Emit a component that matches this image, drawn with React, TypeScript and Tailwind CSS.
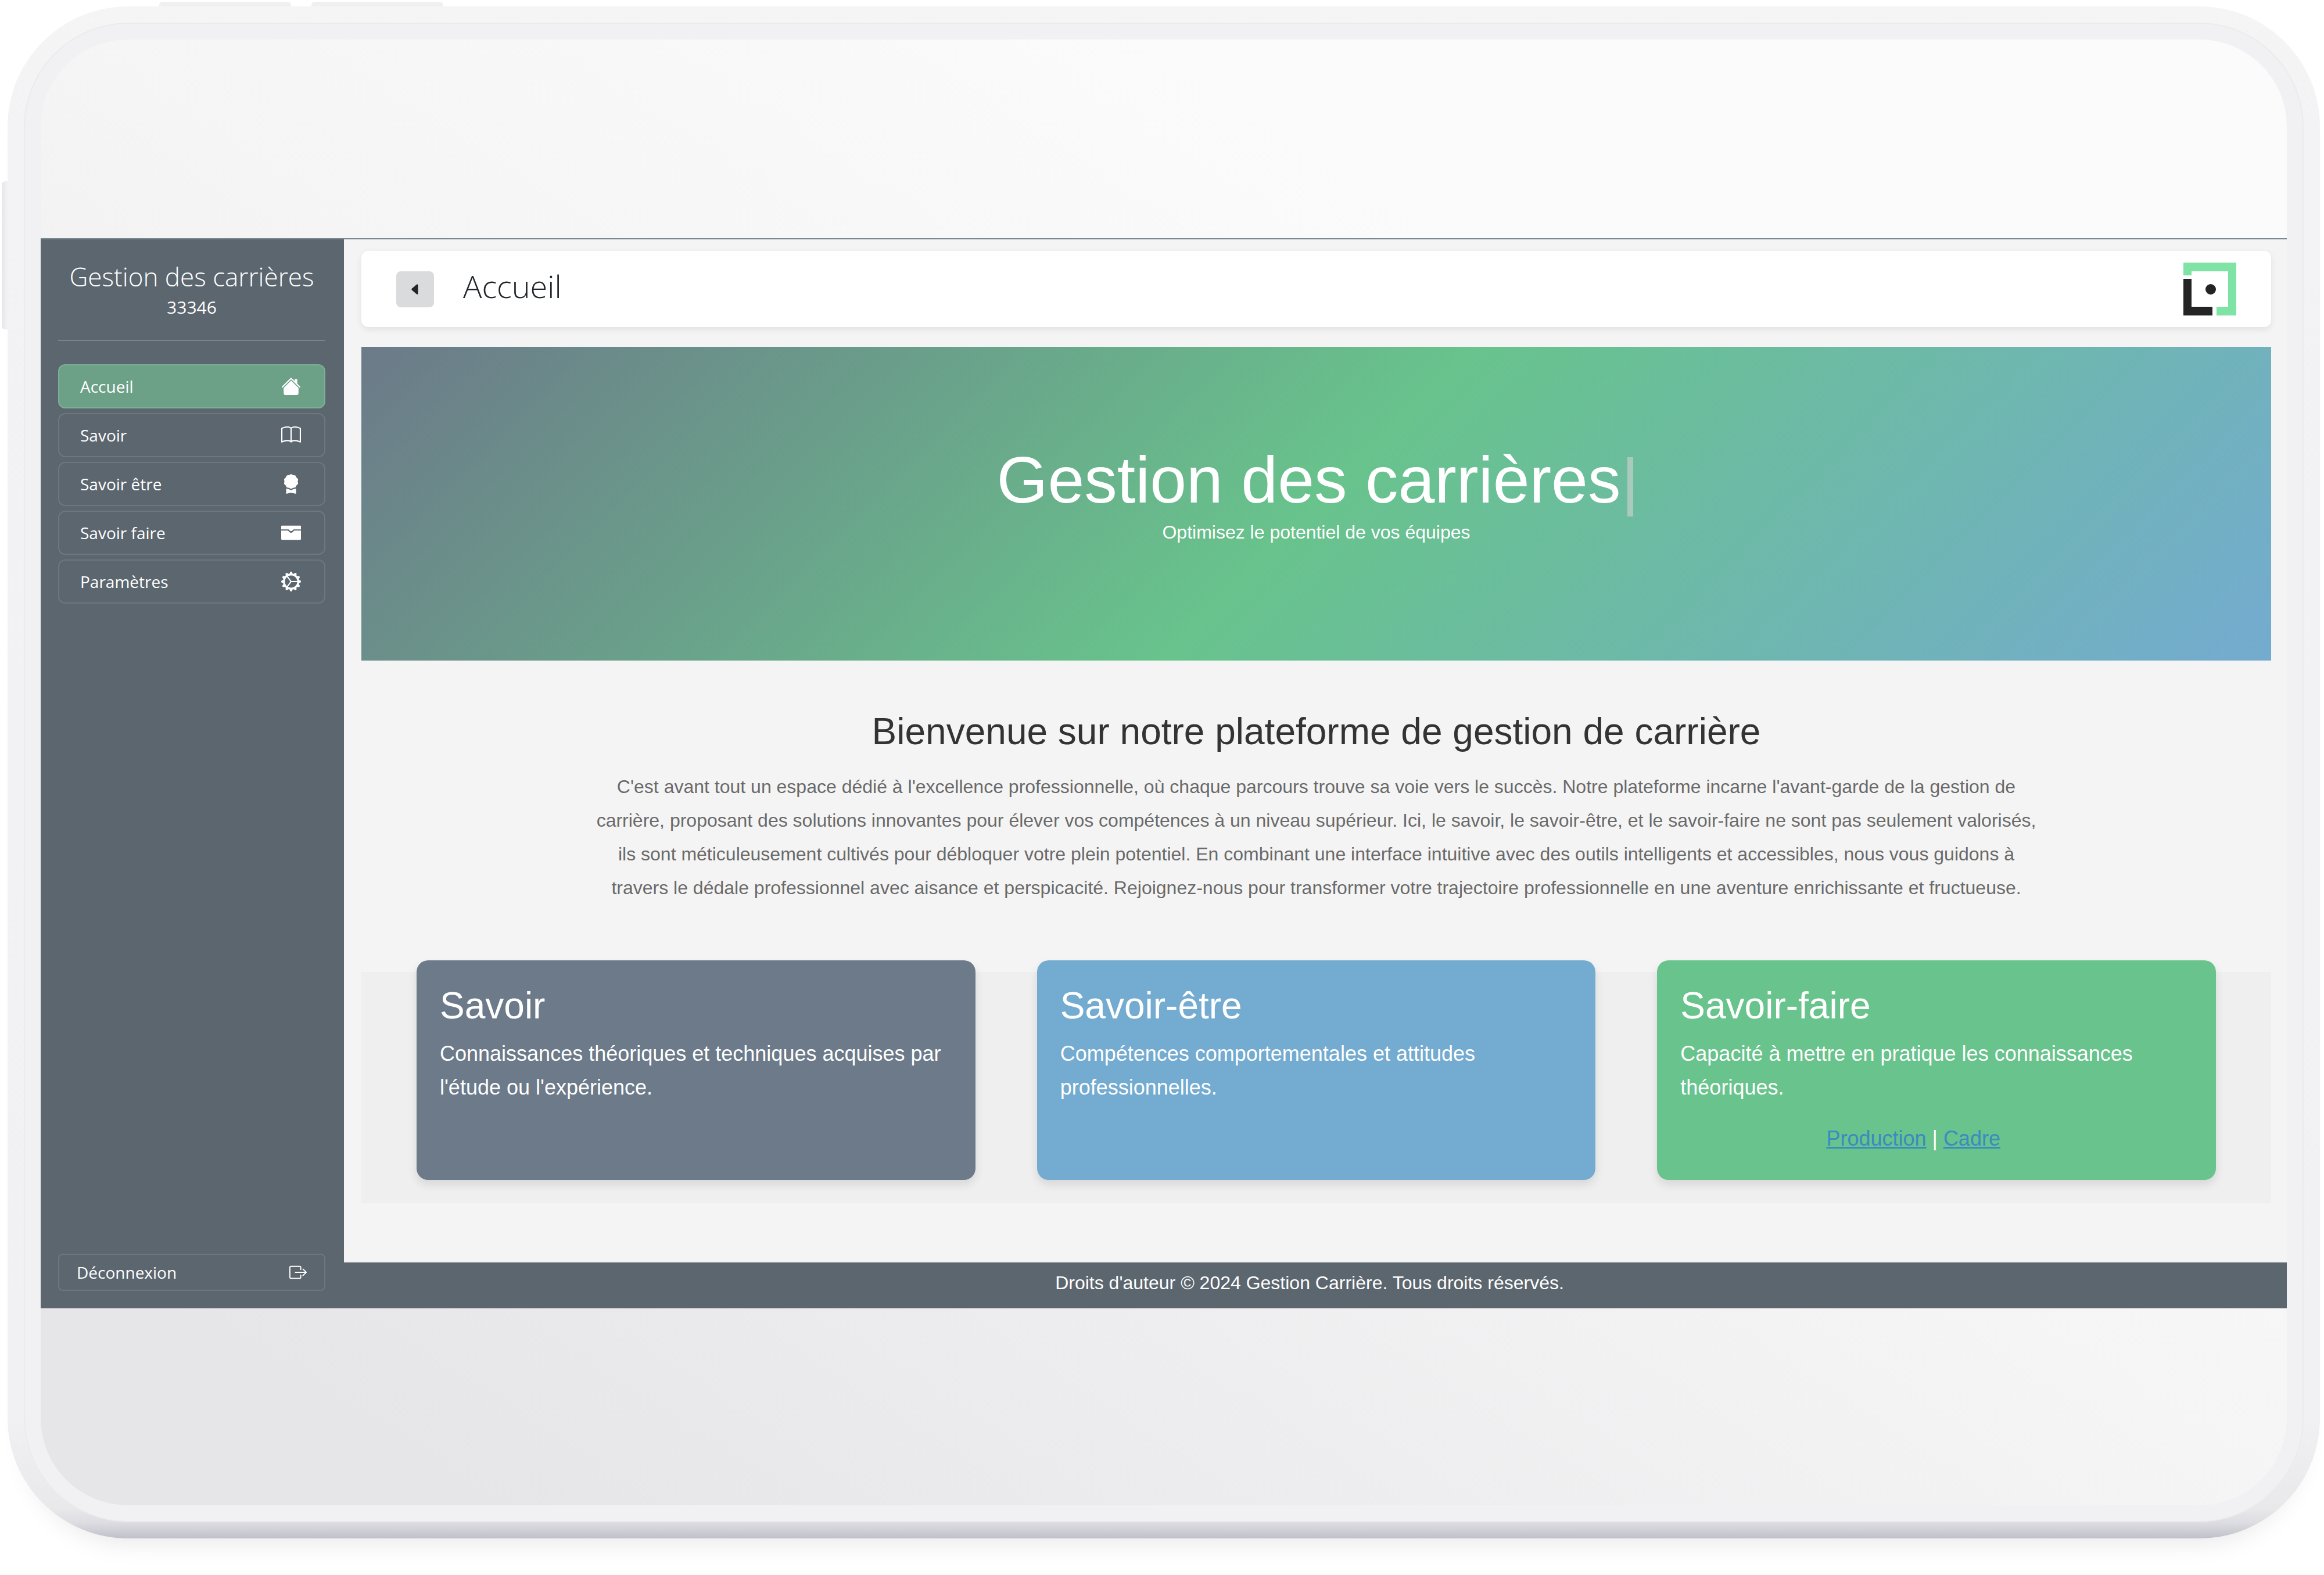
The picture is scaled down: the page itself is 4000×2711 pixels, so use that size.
import type { ReactNode } from "react";
import { BsAwardFill, BsBook, BsBoxArrowRight, BsGearWideConnected, BsHouseFill, BsCaretLeftFill } from "react-icons/bs";

function BriefcaseIcon() {
  return (
    <svg viewBox="0 0 36 36" className="size-[34px]" fill="currentColor" aria-hidden="true">
      <path d="M1 5h34a1 1 0 0 1 1 1v6H23c-1.500 0-2 3-5 3s-3.500-3-5-3H0V6a1 1 0 0 1 1-1z" />
      <path d="M0 14h12c1.500 0 2.500 4 6 4s4.500-4 6-4h12v15a2 2 0 0 1-2 2H2a2 2 0 0 1-2-2z" />
    </svg>
  );
}

const navItems: { label: string; icon: ReactNode; active?: boolean }[] = [
  { label: "Accueil", icon: <BsHouseFill className="size-[34px]" />, active: true },
  { label: "Savoir", icon: <BsBook className="size-[34px]" /> },
  { label: "Savoir être", icon: <BsAwardFill className="size-[34px]" /> },
  { label: "Savoir faire", icon: <BriefcaseIcon /> },
  { label: "Paramètres", icon: <BsGearWideConnected className="size-[34px]" /> },
];

function Sidebar() {
  return (
    <aside className="flex w-[522px] shrink-0 flex-col bg-[#5c666f] pr-8 pb-[30px] pl-[30px] font-['Open_Sans',sans-serif] text-white">
      <div className="border-b-2 border-[#7b848d] pt-8 pb-[35px] text-center">
        <h2 className="text-[44px] leading-[64px] font-light whitespace-nowrap">Gestion des carrières</h2>
        <p className="text-[30px] leading-[42px]">33346</p>
      </div>
      <nav className="mt-10 flex flex-col gap-2">
        {navItems.map((item) => (
          <a
            key={item.label}
            href="#"
            className={
              item.active
                ? "flex h-[76px] items-center justify-between rounded-xl border-2 border-[#7cb096] bg-[#6ca188] pr-10 pl-9 text-[28px]"
                : "flex h-[76px] items-center justify-between rounded-xl border-2 border-[#6d7780] pr-10 pl-9 text-[28px]"
            }
          >
            {item.label}
            {item.icon}
          </a>
        ))}
      </nav>
      <button className="mt-auto flex h-16 items-center justify-between rounded-lg border-2 border-[#6d7780] px-[30px] text-[28px]">
        Déconnexion
        <BsBoxArrowRight className="size-[30px]" />
      </button>
    </aside>
  );
}

function Logo() {
  return (
    <svg viewBox="0 0 91 91" className="size-[91px]" role="img" aria-label="Logo">
      <path d="M0 0H91V91H57V76H77V15H14V22H0z" fill="#7fe3a6" />
      <path d="M0 28H14V76H50V91H0z" fill="#242424" />
      <circle cx="47" cy="46" r="9" fill="#242424" />
    </svg>
  );
}

function Card({ title, text, color, children }: { title: string; text: string; color: string; children?: ReactNode }) {
  return (
    <article className={`flex min-h-[378px] flex-col rounded-[20px] px-10 pt-10 shadow-[0_8px_16px_rgba(0,0,0,0.1)] ${color}`}>
      <h3 className="text-[64px] leading-[76px]">{title}</h3>
      <p className="mt-4 text-[36px] leading-[58px]">{text}</p>
      {children}
    </article>
  );
}

function AppScreen() {
  return (
    <div className="flex min-h-[1842px] border-t-2 border-[#7b8890] font-['Liberation_Sans',Arial,sans-serif]">
      <Sidebar />
      <div className="flex min-w-0 grow flex-col bg-[#f4f4f4]">
        <div className="grow pt-5 pr-[27px] pl-[30px]">
          <header className="flex h-[131px] items-center rounded-xl bg-white px-[60px] shadow-[0_4px_12px_rgba(0,0,0,0.08)]">
            <button aria-label="Réduire le menu" className="flex h-[62px] w-[65px] items-center justify-center rounded-lg bg-[#dadbdd] text-[#212529]">
              <BsCaretLeftFill className="size-6" />
            </button>
            <h1 className="ml-[50px] grow pb-3 font-['Open_Sans',sans-serif] text-[54px] leading-[64px] font-light text-[#212529]">Accueil</h1>
            <Logo />
          </header>

          <section className="mt-[34px] flex h-[540px] flex-col items-center bg-[linear-gradient(135deg,#6c7a89,#68c38c_50%,#74abd0)] pt-[162px] text-white">
            <h2 className="flex items-end pr-1 text-[113px] leading-[134px]">
              Gestion des carrières
              <span className="mb-1 ml-3 h-[102px] w-[10px] bg-[#a8cbbd]" />
            </h2>
            <p className="text-[32px] leading-[46px]">Optimisez le potentiel de vos équipes</p>
          </section>

          <section className="mx-auto flex max-w-[2500px] flex-col items-center pt-[82px] text-center">
            <h2 className="text-[64px] leading-[80px] text-[#333]">Bienvenue sur notre plateforme de gestion de carrière</h2>
            <p className="mt-[26px] text-[32px] leading-[58px] text-[#6a6a6a]">
              C'est avant tout un espace dédié à l'excellence professionnelle, où chaque parcours trouve sa voie vers le
              succès. Notre plateforme incarne l'avant-garde de la gestion de carrière, proposant des solutions innovantes
              pour élever vos compétences à un niveau supérieur. Ici, le savoir, le savoir-être, et le savoir-faire ne sont
              pas seulement valorisés, ils sont méticuleusement cultivés pour débloquer votre plein potentiel. En combinant
              une interface intuitive avec des outils intelligents et accessibles, nous vous guidons à travers le dédale
              professionnel avec aisance et perspicacité. Rejoignez-nous pour transformer votre trajectoire professionnelle
              en une aventure enrichissante et fructueuse.
            </p>
          </section>

          <section className="mt-[116px] flex flex-col bg-[#efefef] px-[95px] pb-10">
            <div className="-mt-5 grid grid-cols-3 gap-[106px] text-white">
              <Card title="Savoir" text="Connaissances théoriques et techniques acquises par l'étude ou l'expérience." color="bg-[#6c7a89]" />
              <Card title="Savoir-être" text="Compétences comportementales et attitudes professionnelles." color="bg-[#74abd0]" />
              <Card title="Savoir-faire" text="Capacité à mettre en pratique les connaissances théoriques." color="bg-[#69c38c]">
                <p className="mt-[30px] pr-20 text-center text-[36px] leading-[58px]">
                  <a href="#" className="text-[#3a8bc0] underline">Production</a> |{" "}
                  <a href="#" className="text-[#3a8bc0] underline">Cadre</a>
                </p>
              </Card>
            </div>
          </section>
        </div>
        <footer className="bg-[#5c666f] pr-5 pb-2 text-center text-[32px] leading-[71px] text-white">
          Droits d'auteur © 2024 Gestion Carrière. Tous droits réservés.
        </footer>
      </div>
    </div>
  );
}

export default function App() {
  return (
    <div className="min-h-[2711px] overflow-hidden bg-white pt-[11px] pr-[7px] pl-[13px]">
      <div className="relative rounded-[207px] bg-[linear-gradient(180deg,#f5f5f5,#f3f3f5_8%,#f1f1f4_92%,#e9e9eb_98%,#dddce2_99%,#bfc0c9)] p-7 shadow-[0_40px_50px_-40px_rgba(0,0,0,0.12)]">
        <div className="absolute -top-2 left-[261px] h-2 w-[227px] rounded-t-md bg-[#f0f0f2]" />
        <div className="absolute -top-2 left-[523px] h-2 w-[227px] rounded-t-md bg-[#f0f0f2]" />
        <div className="absolute top-[301px] -left-[10px] h-[255px] w-[10px] rounded-l-md bg-[linear-gradient(90deg,#e6e6ea,#f3f3f6)]" />
        <div className="rounded-[180px] border-2 border-[#ebebed] bg-[#f1f1f4] p-[27px]">
          <div className="overflow-hidden rounded-[150px] bg-[linear-gradient(to_top_right,#e6e6e8_10%,#f5f5f6_50%,#fbfbfb_75%)] pt-[342px] pb-[339px]">
            <AppScreen />
          </div>
        </div>
      </div>
    </div>
  );
}
